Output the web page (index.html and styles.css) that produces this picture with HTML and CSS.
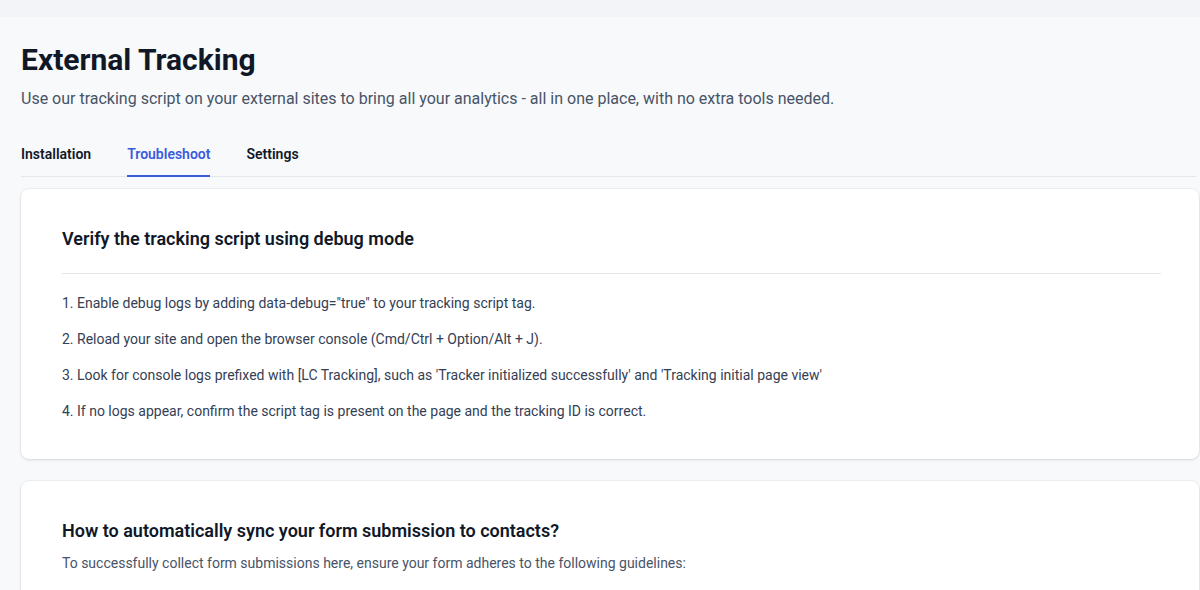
FILE: index.html
```html
<!DOCTYPE html>
<html>

<head>
    <title>External Tracking</title>
    <meta charset="utf-8">
    <meta name="viewport" content="width=device-width, initial-scale=1.0">
    <link rel="stylesheet" href="styles.css">
</head>

<body>
    <div class="topbar"></div>

    <main class="side">
        <header class="kop">
            <h1>External Tracking</h1>
            <p class="under">Use our tracking script on your external sites to bring all your analytics - all in one place, with no extra tools needed.</p>
        </header>

        <nav class="faner">
            <button class="fane">Installation</button>
            <button class="fane valgt">Troubleshoot</button>
            <button class="fane">Settings</button>
        </nav>

        <section class="kort">
            <h2>Verify the tracking script using debug mode</h2>
            <div class="skille"></div>
            <ol class="trin">
                <li>1. Enable debug logs by adding data-debug="true" to your tracking script tag.</li>
                <li>2. Reload your site and open the browser console (Cmd/Ctrl + Option/Alt + J).</li>
                <li>3. Look for console logs prefixed with [LC Tracking], such as 'Tracker initialized successfully' and 'Tracking initial page view'</li>
                <li>4. If no logs appear, confirm the script tag is present on the page and the tracking ID is correct.</li>
            </ol>
        </section>

        <section class="kort">
            <h2>How to automatically sync your form submission to contacts?</h2>
            <p class="tekst">To successfully collect form submissions here, ensure your form adheres to the following guidelines:</p>
        </section>
    </main>
</body>

</html>
```

FILE: styles.css
```css
body {
    margin: 0;
    background-color: #f8f9fb;
    font-family: Roboto, "Liberation Sans", sans-serif;
    color: #101828;
    overflow: hidden;
}

.topbar {
    height: 17px;
    background-color: #f2f4f7;
}

.side {
    padding: 0 0 0 21px;
}

.kop {
    padding-top: 25px;
}

h1 {
    margin: 0;
    font-size: 30px;
    font-weight: 700;
    line-height: 36px;
    color: #101828;
}

.under {
    margin: 9px 0 0;
    font-size: 16px;
    line-height: 24px;
    color: #475467;
}

.faner {
    display: flex;
    gap: 36px;
    margin-top: 33px;
    border-bottom: 1px solid #e4e7ec;
    margin-right: 4px;
}

.fane {
    border: none;
    background: none;
    padding: 0 0 11px;
    margin: 0;
    font-family: inherit;
    font-size: 14px;
    font-weight: 600;
    line-height: 20px;
    color: #101828;
    border-bottom: 2px solid transparent;
    margin-bottom: -1px;
}

.fane.valgt {
    color: #3b5bdb;
    border-bottom-color: #3b5bdb;
}

.kort {
    background-color: #ffffff;
    border-radius: 8px;
    box-shadow: 0 1px 3px rgba(16, 24, 40, 0.12), 0 0 0 1px rgba(16, 24, 40, 0.04);
    margin-top: 12px;
    margin-right: 1px;
    padding: 37px 38px 38px 41px;
}

.kort + .kort {
    margin-top: 22px;
    padding-top: 37px;
}

h2 {
    margin: 0;
    font-size: 18px;
    font-weight: 600;
    line-height: 26px;
    color: #101828;
}

.skille {
    height: 1px;
    background-color: #e4e7ec;
    margin: 21px 0 19px;
}

.trin {
    list-style: none;
    margin: 0;
    padding: 0;
    display: flex;
    flex-direction: column;
    gap: 16px;
}

.trin li {
    font-size: 14px;
    line-height: 20px;
    color: #344054;
}

.tekst {
    margin: 9px 0 0;
    font-size: 14px;
    line-height: 20px;
    color: #475467;
}
```
